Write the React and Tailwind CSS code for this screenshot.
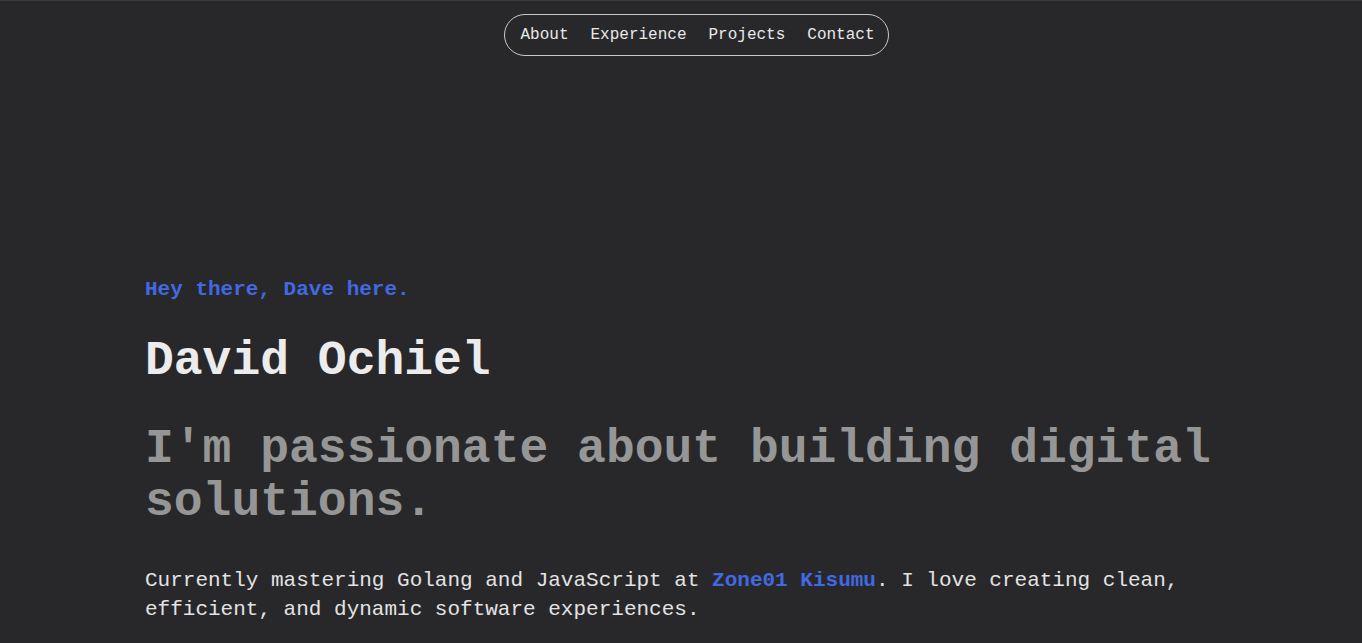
const links = ["About", "Experience", "Projects", "Contact"];

function Nav() {
  return (
    <header className="flex justify-center pl-[31px] pt-[13px]">
      <nav className="flex h-[42px] items-center gap-[22px] rounded-full border border-[#c9c9c9] pl-[15px] pr-[13px]">
        {links.map((link) => (
          <a
            key={link}
            href={`#${link.toLowerCase()}`}
            className="text-[16px] leading-[20px] text-[#e8e8e8]"
          >
            {link}
          </a>
        ))}
      </nav>
    </header>
  );
}

function Hero() {
  return (
    <section className="mx-auto max-w-[1072px] pt-[220px]">
      <p className="text-[21px] font-bold leading-[28px] text-[#4169e1]">
        Hey there, Dave here.
      </p>

      <h1 className="mt-[31px] text-[48px] font-bold leading-[1.1] text-[#ececec]">
        David Ochiel
      </h1>

      <h2 className="mt-[35px] text-[48px] font-bold leading-[1.1] text-[#969696]">
        I'm passionate about building digital solutions.
      </h2>

      <p className="mt-[38px] text-[21px] leading-[29px] text-[#e3e3e3]">
        Currently mastering Golang and JavaScript at{" "}
        <a href="#" className="font-bold text-[#4169e1]">
          Zone01 Kisumu
        </a>
        . I love creating clean, efficient, and dynamic software experiences.
      </p>
    </section>
  );
}

export default function App() {
  return (
    <main className="min-h-screen border-t border-[#3a3a3d] bg-[#28282b] font-['Liberation_Mono',monospace]">
      <Nav />
      <Hero />
    </main>
  );
}
